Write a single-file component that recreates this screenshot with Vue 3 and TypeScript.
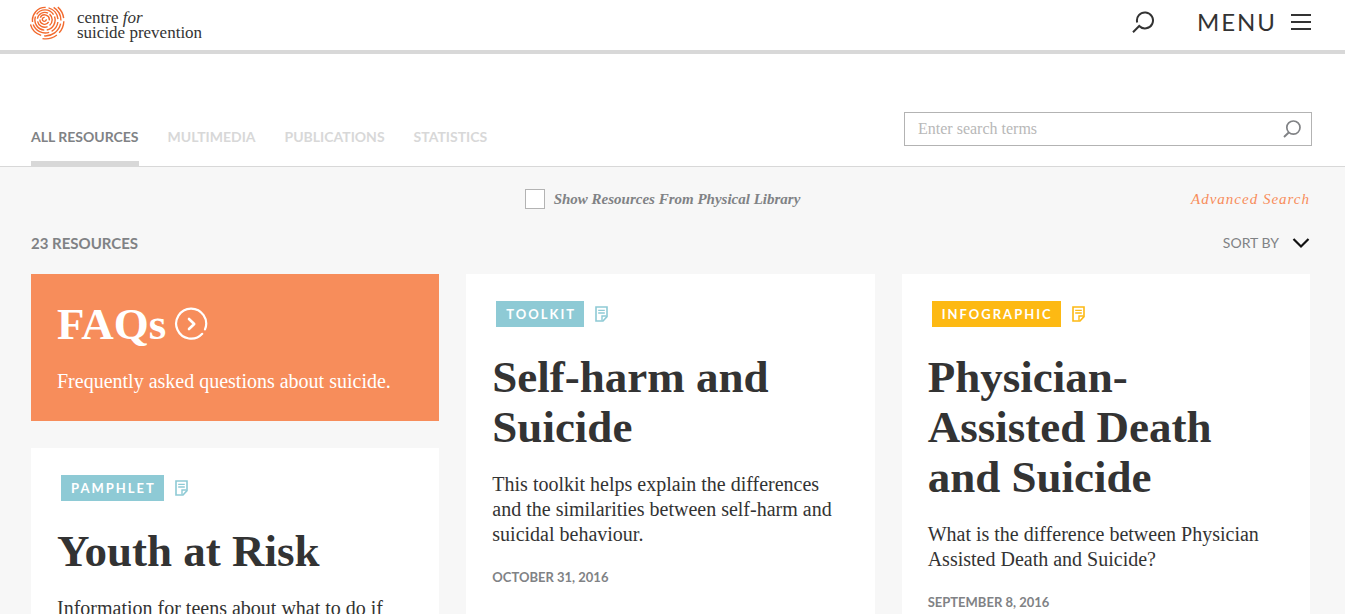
<script setup lang="ts">
import { ref } from 'vue'

interface Resource {
  kind: string
  tone: 'teal' | 'amber'
  title: string
  summary: string
  date?: string
}

interface Ring {
  radius: number
  arcs: [number, number][]
}

const tabs: string[] = ['All Resources', 'Multimedia', 'Publications', 'Statistics']
const activeTab = ref('All Resources')
const query = ref('')
const physicalOnly = ref(false)

const columns: Resource[][] = [
  [
    {
      kind: 'Pamphlet',
      tone: 'teal',
      title: 'Youth at Risk',
      summary: 'Information for teens about what to do if',
    },
  ],
  [
    {
      kind: 'Toolkit',
      tone: 'teal',
      title: 'Self-harm and Suicide',
      summary:
        'This toolkit helps explain the differences and the similarities between self-harm and suicidal behaviour.',
      date: 'October 31, 2016',
    },
  ],
  [
    {
      kind: 'Infographic',
      tone: 'amber',
      title: 'Physician-Assisted Death and Suicide',
      summary: 'What is the difference between Physician Assisted Death and Suicide?',
      date: 'September 8, 2016',
    },
  ],
]

// Fingerprint mark: start and end angles of every ridge, clockwise from east.
const rings: Ring[] = [
  { radius: 2, arcs: [[0, 280]] },
  { radius: 4.7, arcs: [[30, 180], [205, 370]] },
  { radius: 7.4, arcs: [[-50, 50], [68, 168], [188, 296]] },
  { radius: 10.1, arcs: [[-20, 80], [94, 200], [214, 328]] },
  { radius: 12.8, arcs: [[-75, -5], [8, 60], [72, 160], [172, 272]] },
  { radius: 15.5, arcs: [[-58, 0], [12, 95], [106, 165]] },
  { radius: 18.2, arcs: [[-48, -8], [2, 42], [52, 100]] },
]

function ridge(radius: number, from: number, to: number): string {
  const centre = 16.2 + radius * 0.08
  const point = (angle: number): string => {
    const rad = (angle * Math.PI) / 180
    return `${(centre + radius * Math.cos(rad)).toFixed(2)} ${(centre + radius * Math.sin(rad)).toFixed(2)}`
  }
  return `M${point(from)}A${radius} ${radius} 0 ${to - from > 180 ? 1 : 0} 1 ${point(to)}`
}

const markPath: string = rings
  .flatMap((ring) => ring.arcs.map(([from, to]) => ridge(ring.radius, from, to)))
  .join('')
</script>

<template>
  <div class="page">
    <header class="top">
      <a class="brand" href="#">
        <svg class="brand-mark" viewBox="2 2 36 36" aria-hidden="true">
          <path :d="markPath" />
        </svg>
        <span class="brand-name">centre <em>for</em><br />suicide prevention</span>
      </a>
      <nav class="top-actions">
        <button class="icon-button" type="button" aria-label="Search">
          <svg class="glass" viewBox="0 0 22 22" aria-hidden="true">
            <path d="M5.2 11.4A8 8 0 1 1 7.2 15L1 21.2" stroke-width="2" />
          </svg>
        </button>
        <button class="menu" type="button">
          MENU
          <svg class="bars" viewBox="0 0 20 16" aria-hidden="true">
            <path d="M0 1H20M0 8H20M0 15H20" stroke-width="2" />
          </svg>
        </button>
      </nav>
    </header>

    <section class="filters">
      <nav class="tabs">
        <a
          v-for="tab in tabs"
          :key="tab"
          href="#"
          class="tab"
          :class="{ active: tab === activeTab }"
          @click.prevent="activeTab = tab"
          >{{ tab }}</a
        >
      </nav>
      <form class="search" @submit.prevent>
        <input v-model="query" type="text" placeholder="Enter search terms" aria-label="Search terms" />
        <button class="icon-button" type="submit" aria-label="Submit search">
          <svg class="glass-small" viewBox="0 0 18 18" aria-hidden="true">
            <circle cx="10.4" cy="7.6" r="6.6" stroke-width="1.7" />
            <path d="M6 12.2L1 17" stroke-width="1.9" />
          </svg>
        </button>
      </form>
    </section>

    <main class="results">
      <div class="options">
        <label class="physical">
          <input v-model="physicalOnly" type="checkbox" />
          <span>Show Resources From Physical Library</span>
        </label>
        <a class="advanced" href="#">Advanced Search</a>
      </div>

      <div class="summary-row">
        <span class="count">23 Resources</span>
        <button class="sort" type="button">
          SORT BY
          <svg class="chevron" viewBox="0 0 18 12" aria-hidden="true">
            <path d="M1.5 2L9 9.5L16.5 2" stroke-width="2.2" />
          </svg>
        </button>
      </div>

      <div class="columns">
        <div v-for="(column, index) in columns" :key="index" class="column">
          <a v-if="index === 0" class="faq" href="#">
            <h2>
              FAQs
              <svg class="faq-arrow" viewBox="0 0 34 34" aria-hidden="true">
                <path d="M28.2 26.8A15 15 0 1 1 31 22.4" stroke-width="2.2" />
                <path d="M15 12L20.2 17L15 22" stroke-width="2.6" />
              </svg>
            </h2>
            <p>Frequently asked questions about suicide.</p>
          </a>
          <article v-for="item in column" :key="item.title" class="card" :class="item.tone">
            <div class="kind">
              <span class="badge">{{ item.kind }}</span>
              <svg class="doc" viewBox="0 0 13 16" aria-hidden="true">
                <path d="M1 1H12V10.6L8 15H1Z" stroke-width="1.6" />
                <path d="M3.2 4.4H9.8M3.2 7H9.8" stroke-width="1.3" />
                <path d="M7 14.4V10H11.4" stroke-width="1.4" />
              </svg>
            </div>
            <h2>{{ item.title }}</h2>
            <p>{{ item.summary }}</p>
            <time v-if="item.date">{{ item.date }}</time>
          </article>
        </div>
      </div>
    </main>
  </div>
</template>

<style>
body {
  margin: 0;
  background: #f7f7f7;
}
</style>

<style scoped>
.page {
  --serif: "Liberation Serif", "Times New Roman", serif;
  --sans: Lato, "Liberation Sans", sans-serif;
  display: flex;
  flex-direction: column;
  min-height: 100vh;
  color: #333;
  font-family: var(--serif);
}
a {
  color: inherit;
  text-decoration: none;
}
h2,
p {
  margin: 0;
}
button {
  padding: 0;
  border: 0;
  background: none;
  color: inherit;
  cursor: pointer;
}
svg {
  display: block;
  flex: none;
  fill: none;
  stroke: currentColor;
}

.top {
  display: flex;
  align-items: center;
  justify-content: space-between;
  height: 50px;
  padding: 0 34px 0 30px;
  border-bottom: 4px solid #d8d8d8;
  background: #fff;
}
.brand {
  display: flex;
  align-items: center;
  gap: 11px;
  padding-bottom: 4px;
}
.brand-mark {
  width: 36px;
  height: 36px;
  color: #f26a2e;
  stroke-width: 1.4;
}
.brand-name {
  padding-top: 3px;
  font-size: 17px;
  line-height: 15px;
}
.top-actions {
  display: flex;
  align-items: center;
  gap: 43px;
  padding-bottom: 6px;
}
.glass {
  width: 22px;
  height: 22px;
}
.menu {
  display: flex;
  align-items: center;
  gap: 14px;
  font: 400 24px/28px var(--sans);
  letter-spacing: 2px;
}
.bars {
  width: 20px;
  height: 16px;
}

.filters {
  display: flex;
  align-items: flex-end;
  justify-content: space-between;
  padding: 58px 33px 0 31px;
  border-bottom: 1px solid #d8d8d8;
  background: #fff;
}
.tabs {
  display: flex;
  gap: 29px;
}
.tab {
  padding-bottom: 14px;
  border-bottom: 5px solid transparent;
  color: #d8d8d8;
  font: 700 14px/20px var(--sans);
  text-transform: uppercase;
}
.tab.active {
  border-color: #d8d8d8;
  color: #808285;
}
.search {
  box-sizing: border-box;
  display: flex;
  align-items: center;
  width: 100%;
  max-width: 408px;
  height: 34px;
  margin-bottom: 20px;
  padding: 0 10px 0 13px;
  border: 1px solid #b3b3b3;
}
.search input {
  flex: 1;
  min-width: 0;
  padding: 0;
  border: 0;
  outline: 0;
  background: none;
  color: #333;
  font: 16px/20px var(--serif);
}
.search input::placeholder {
  color: #b8b8b8;
}
.search button {
  color: #808285;
}
.glass-small {
  width: 18px;
  height: 18px;
}

.results {
  display: flex;
  flex: 1;
  flex-direction: column;
  padding: 22px 35px 0 31px;
}
.options {
  display: grid;
  grid-template-columns: 1fr auto 1fr;
  align-items: center;
}
.physical {
  display: flex;
  grid-column: 2;
  align-items: center;
  gap: 9px;
  padding-right: 16px;
  color: #808285;
  font: italic 700 15px/20px var(--serif);
}
.physical input {
  box-sizing: border-box;
  width: 20px;
  height: 20px;
  margin: 0;
  border: 1px solid #b3b3b3;
  background: #fff;
  appearance: none;
}
.physical input:checked {
  background: #808285;
}
.advanced {
  justify-self: end;
  color: #f78d5b;
  font: italic 400 15px/20px var(--serif);
  letter-spacing: 1px;
}
.summary-row {
  display: flex;
  align-items: center;
  justify-content: space-between;
  margin: 24px 0 21px;
  color: #808285;
}
.count {
  font: 700 15px/20px var(--sans);
  text-transform: uppercase;
}
.sort {
  display: flex;
  align-items: center;
  gap: 13px;
  font: 400 14px/20px var(--sans);
}
.chevron {
  width: 18px;
  height: 12px;
  color: #111;
}

.columns {
  display: grid;
  flex: 1;
  grid-template-columns: repeat(3, minmax(0, 1fr));
  gap: 27px;
}
.column {
  display: flex;
  flex-direction: column;
  gap: 27px;
}
.faq,
.card {
  padding: 27px 26px;
}
h2 {
  padding-right: 8px;
  font-size: 45px;
  font-weight: 700;
  line-height: 50px;
}
p {
  margin-top: 20px;
  font-size: 20px;
  line-height: 25px;
}
.faq {
  padding: 25px 26px 27px;
  background: #f78d5b;
  color: #fff;
}
.faq h2 {
  display: flex;
  align-items: center;
  gap: 8px;
}
.faq-arrow {
  width: 34px;
  height: 34px;
  stroke-linecap: round;
  stroke-linejoin: round;
}
.card {
  flex: 1;
  background: #fff;
}
.kind {
  display: flex;
  align-items: center;
  gap: 11px;
  margin: 0 0 25px 4px;
}
.teal .kind {
  color: #8ecad5;
}
.amber .kind {
  color: #fdb913;
}
.badge {
  padding: 0 8px 0 10px;
  background: currentColor;
  font: 700 13px/26px var(--sans);
  letter-spacing: 2px;
  text-transform: uppercase;
  -webkit-text-fill-color: #fff;
}
.doc {
  width: 13px;
  height: 16px;
}
time {
  display: block;
  margin-top: 20px;
  color: #808285;
  font: 700 13px/20px var(--sans);
  text-transform: uppercase;
}
</style>
